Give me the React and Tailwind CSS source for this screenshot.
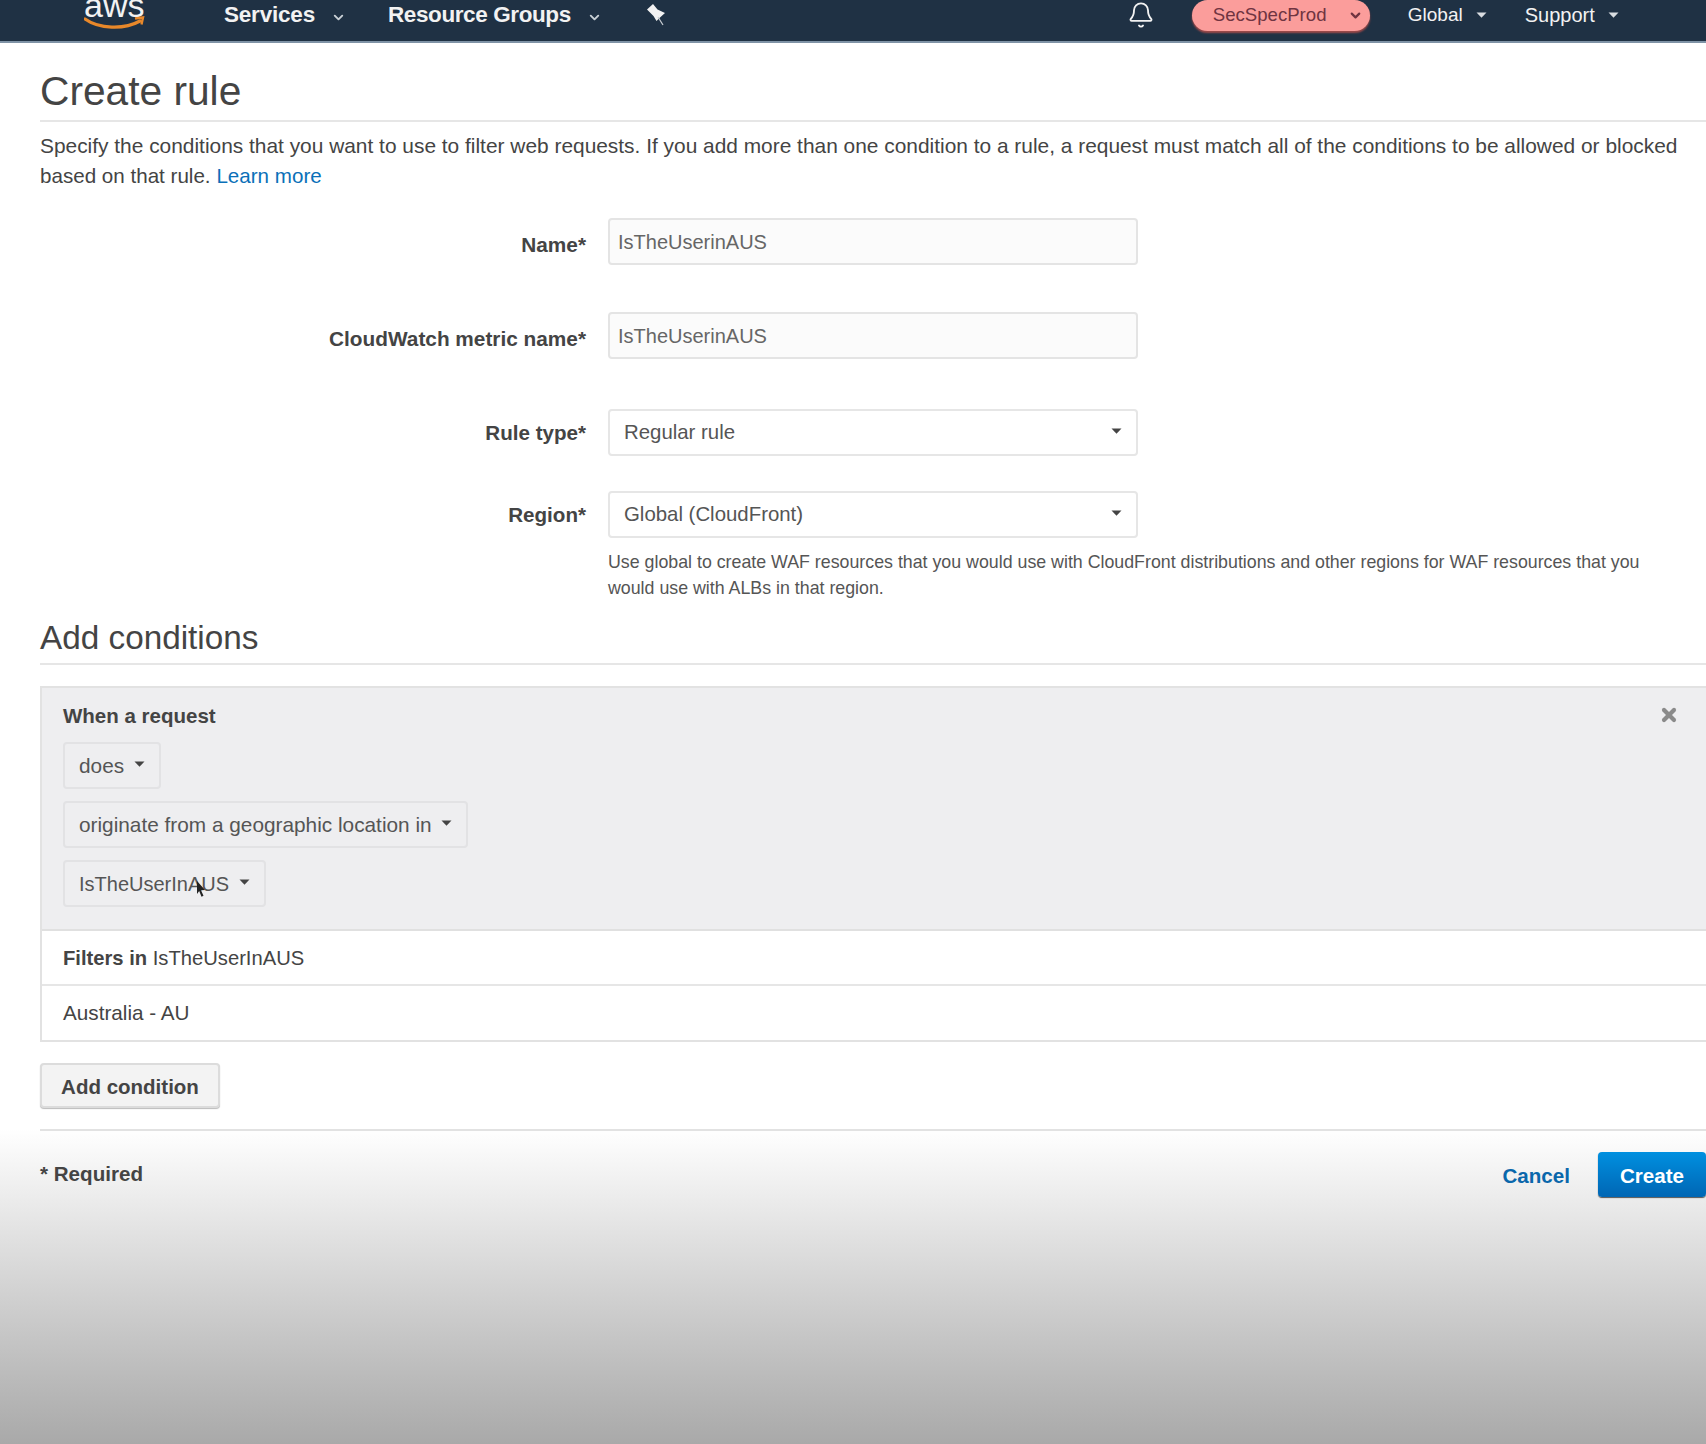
import { ChevronDown, Bell, X } from 'lucide-react';

function Caret({ className = 'text-[#444]' }) {
  return (
    <svg className={className} width="11" height="6" viewBox="0 0 11 6" fill="currentColor">
      <path d="M0.5 0.5h10L5.5 5.8z" />
    </svg>
  );
}

function Pin() {
  return (
    <svg width="20" height="24" viewBox="0 0 20 24" fill="#f2f2f2">
      <path d="M7 1l4.5 5.5L19 10l-5 4.5-3.5 3.5-3-5L1 6.5z" />
      <path d="M12 14l5 8" stroke="#c9ced3" strokeWidth="1.2" fill="none" />
    </svg>
  );
}

function Field({ label, value, top }) {
  return (
    <div className={`flex items-center ${top}`}>
      <label className="w-[546px] text-right text-[20.8px] font-bold text-[#444] pt-[6px]">{label}</label>
      <div className="ml-[22px] w-[530px] h-[47px] flex items-center px-[8px] bg-[#fbfbfb] border-2 border-[#e4e4e4] rounded text-[20px] text-[#666]">
        {value}
      </div>
    </div>
  );
}

function SelectField({ label, value, top }) {
  return (
    <div className={`flex items-center ${top}`}>
      <label className="w-[546px] text-right text-[20.6px] font-bold text-[#444] pt-[2px]">{label}</label>
      <div className="ml-[22px] w-[530px] h-[47px] flex items-center justify-between pl-[14px] pr-[14px] bg-white border-2 border-[#e6e6e6] rounded text-[20.4px] text-[#555]">
        <span>{value}</span>
        <Caret className="text-[#444] mb-1" />
      </div>
    </div>
  );
}

function Dropdown({ children, className }) {
  return (
    <div className={`${className} h-[47px] flex items-center justify-between pl-[14px] pr-[14px] border-2 border-[#e2e2e4] rounded text-[#555]`}>
      <span>{children}</span>
      <Caret className="text-[#444] mb-1" />
    </div>
  );
}

function Cursor() {
  return (
    <svg className="absolute left-[133px] top-[21px]" width="11" height="16" viewBox="0 0 11 16" fill="#222">
      <path d="M1 0l8 9-4 .3 2.5 5.5-2 .9-2.3-5.6L1 13z" />
    </svg>
  );
}

export default function App() {
  return (
    <div className="w-[1706px] h-[1444px] overflow-hidden flex flex-col bg-white font-['Liberation_Sans',Arial,sans-serif] text-[#444]">
      <header className="h-[43px] shrink-0 flex items-center pb-[11px] bg-[#1f3144] border-b-2 border-[#7f93a6] text-[#f2f2f2]">
        <div className="ml-[84px] self-start w-[66px] h-[41px] relative overflow-hidden shrink-0">
          <span className="absolute left-0 -top-[15px] text-[34px] leading-[40px] text-[#f2f2f2]">aws</span>
          <svg className="absolute left-0 top-[15px]" width="66" height="18" viewBox="0 0 66 18" fill="none">
            <path d="M1 4C15 14 40 15 56 6" stroke="#e8882a" strokeWidth="3.2" strokeLinecap="round" />
            <path d="M51 3.5l8-1-1.5 7" stroke="#e8882a" strokeWidth="2.4" fill="none" />
          </svg>
        </div>
        <span className="ml-[74px] text-[22.5px] font-bold tracking-[-0.2px]">Services</span>
        <ChevronDown className="ml-[16px] mt-1" size={15} strokeWidth={3} color="#c9d0d6" />
        <span className="ml-[42px] text-[22.5px] font-bold tracking-[-0.4px]">Resource Groups</span>
        <ChevronDown className="ml-[16px] mt-1" size={15} strokeWidth={3} color="#c9d0d6" />
        <span className="ml-[44px]"><Pin /></span>
        <Bell className="ml-[461px]" size={28} strokeWidth={1.6} color="#f2f2f2" />
        <div className="ml-[37px] w-[178px] h-[31px] flex items-center justify-between pl-[21px] pr-[7px] bg-[#fb9d9b] rounded-full shadow-[0_2px_2px_#a04a4a] text-[18.6px] text-[#6f3441]">
          <span>SecSpecProd</span>
          <ChevronDown size={15} strokeWidth={3.5} color="#6f3441" />
        </div>
        <span className="ml-[38px] text-[19px]">Global</span>
        <span className="ml-[13px]"><Caret className="text-[#d9dde1]" /></span>
        <span className="ml-[38px] text-[20px]">Support</span>
        <span className="ml-[13px]"><Caret className="text-[#d9dde1]" /></span>
      </header>

      <main className="flex-1 flex flex-col pl-[40px]">
        <div className="pt-[26px] pb-[6px] border-b-2 border-[#e6e6e6]">
          <h1 className="text-[40.7px] leading-[45px] text-[#444]">Create rule</h1>
        </div>
        <p className="mt-[9px] pr-[20px] text-[20.9px] leading-[30px] text-[#444]">
          Specify the conditions that you want to use to filter web requests. If you add more than one condition to a rule, a request must match all of the conditions to be allowed or blocked <span className="text-[20.6px]">based on that rule.</span> <span className="text-[20.6px] text-[#0a70b8]">Learn more</span>
        </p>

        <Field label="Name*" value="IsTheUserinAUS" top="mt-[27px]" />
        <Field label="CloudWatch metric name*" value="IsTheUserinAUS" top="mt-[47px]" />
        <SelectField label="Rule type*" value="Regular rule" top="mt-[50px]" />
        <SelectField label="Region*" value="Global (CloudFront)" top="mt-[35px]" />

        <p className="ml-[568px] mt-[11px] pr-[60px] text-[17.8px] leading-[26px] text-[#555]">
          Use global to create WAF resources that you would use with CloudFront distributions and other regions for WAF resources that you would use with ALBs in that region.
        </p>

        <div className="mt-[17px] pb-[5px] border-b-2 border-[#e6e6e6]">
          <h2 className="text-[33.3px] leading-[40px] text-[#444]">Add conditions</h2>
        </div>

        <section className="mt-[21px] border-2 border-r-0 border-[#e2e2e2]">
          <div className="relative h-[243px] px-[21px] pt-[15px] bg-[#eeeef0] border-b-2 border-[#e0e0e0]">
            <X className="absolute right-[27px] top-[17px]" size={20} strokeWidth={5} color="#8a8a8a" />
            <div className="text-[20.5px] leading-[26px] font-bold text-[#444]">When a request</div>
            <Dropdown className="w-[98px] mt-[13px] text-[20.8px]">does</Dropdown>
            <Dropdown className="w-[405px] mt-[12px] text-[20.8px]">originate from a geographic location in</Dropdown>
            <div className="relative w-[203px]">
              <Dropdown className="w-[203px] mt-[12px] text-[20px]">IsTheUserInAUS</Dropdown>
              <Cursor />
            </div>
          </div>
          <div className="h-[55px] flex items-center px-[21px] pt-[2px] text-[20.2px] text-[#444] border-b-2 border-[#e6e6e6]">
            <b>Filters in</b>&nbsp;IsTheUserInAUS
          </div>
          <div className="h-[54px] flex items-center px-[21px] text-[20.7px] text-[#444]">Australia - AU</div>
        </section>

        <div className="mt-[21px]">
          <button className="w-[180px] h-[45px] pt-1 text-[20.5px] font-bold text-[#444] bg-[#f3f3f3] border-2 border-[#dcdcdc] rounded shadow-[0_1px_1px_#bbb]">Add condition</button>
        </div>
      </main>

      <footer className="h-[315px] shrink-0 ml-[40px] relative">
        <div className="absolute -left-[40px] right-0 top-0 bottom-0 bg-gradient-to-b from-white to-[#a9a9a9]"></div>
        <div className="relative h-[2px] bg-[#e2e2e2]"></div>
        <div className="relative flex items-center justify-between mt-[21px] h-[45px]">
          <span className="text-[20.6px] font-bold text-[#444]">* Required</span>
          <div className="flex items-center">
            <span className="text-[20.6px] font-bold text-[#0a67ab] mr-[28px] mt-[3px]">Cancel</span>
            <button className="w-[108px] h-[45px] pt-[3px] text-[20.6px] font-bold text-white bg-gradient-to-b from-[#0090e0] to-[#0066b4] rounded shadow-[0_1px_1px_#555]">Create</button>
          </div>
        </div>
      </footer>
    </div>
  );
}
